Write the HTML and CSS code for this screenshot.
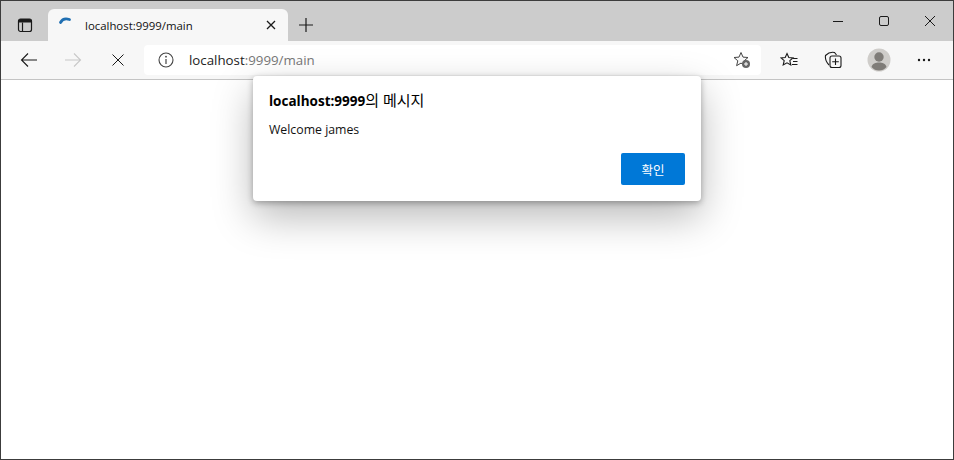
FILE: index.html
```html
<!DOCTYPE html>
<html lang="ko">
<head>
  <meta charset="UTF-8">
  <meta name="viewport" content="width=device-width, initial-scale=1.0">
  <title>localhost:9999/main</title>
  <link rel="stylesheet" href="styles.css">
</head>
<body>
  <div class="window">
    <div class="tabstrip">
      <div class="tab-actions">
        <svg class="icon" width="16" height="16" viewBox="0 0 16 16"><rect x="1.5" y="2" width="13" height="12.5" rx="2" fill="none" stroke="#1a1a1a" stroke-width="1.2"/><path d="M1.5 5.5h13V4a2 2 0 0 0-2-2h-9a2 2 0 0 0-2 2z" fill="#1a1a1a"/><path d="M5.5 5.5v9" stroke="#1a1a1a" stroke-width="1.2"/></svg>
      </div>
      <div class="tab">
        <svg class="spinner" width="16" height="16" viewBox="0 0 16 16"><path d="M2.500 8.500C4 5.500 7 4 11.500 5.500" fill="none" stroke="#1f6fb2" stroke-width="2.800" stroke-linecap="round"/></svg>
        <span class="tab-title">localhost:9999/main</span>
        <svg class="tab-close" width="10" height="10" viewBox="0 0 10 10"><path d="M1 1l8 8M9 1l-8 8" stroke="#1a1a1a" stroke-width="1.300"/></svg>
      </div>
      <svg class="new-tab" width="16" height="16" viewBox="0 0 16 16"><path d="M8 1v14M1 8h14" stroke="#1a1a1a" stroke-width="1.200"/></svg>
      <div class="caption">
        <svg width="12" height="12" viewBox="0 0 12 12"><path d="M1 6.500h10" stroke="#1a1a1a"/></svg>
        <svg width="12" height="12" viewBox="0 0 12 12"><rect x="1.500" y="1.500" width="9" height="9" rx="1.500" fill="none" stroke="#1a1a1a"/></svg>
        <svg width="12" height="12" viewBox="0 0 12 12"><path d="M1 1l10 10M11 1L1 11" stroke="#1a1a1a"/></svg>
      </div>
    </div>

    <div class="toolbar">
      <div class="nav">
        <svg width="18" height="16" viewBox="0 0 18 16"><path d="M17 8H1.500M8 1.500L1.500 8 8 14.500" fill="none" stroke="#1a1a1a" stroke-width="1.100"/></svg>
        <svg width="18" height="16" viewBox="0 0 18 16"><path d="M1 8h15.500M10 1.500L16.500 8 10 14.500" fill="none" stroke="#c8c8c8" stroke-width="1.100"/></svg>
        <svg width="14" height="14" viewBox="0 0 14 14"><path d="M1.500 1.500l11 11M12.500 1.500l-11 11" stroke="#1a1a1a" stroke-width="1"/></svg>
      </div>
      <div class="address">
        <svg class="info" width="16" height="16" viewBox="0 0 16 16"><circle cx="8" cy="8" r="7" fill="none" stroke="#444" stroke-width="1.100"/><path d="M8 7v5" stroke="#444" stroke-width="1.200"/><circle cx="8" cy="4.700" r=".9" fill="#444"/></svg>
        <span class="url"><span class="host">localhost</span>:9999/main</span>
        <svg class="fav-add" width="18" height="18" viewBox="0 0 18 18"><path d="M8 1.500l2 4.600 5 .4-3.800 3.300 1.200 4.900L8 12.100l-4.400 2.600 1.200-4.900L1 6.500l5-.4z" fill="#f7f7f7" stroke="#444" stroke-width="1"/><circle cx="13" cy="13" r="4" fill="#666"/><path d="M13 11v4M11 13h4" stroke="#fff"/></svg>
      </div>
      <div class="tools">
        <span class="tool"><svg width="18" height="16" viewBox="0 0 18 16"><path d="M7 1.500l1.800 4 4.200.4-3.200 2.800 1 4.300L7 10.800 3.200 13l1-4.300L1 5.900l4.200-.4z" fill="none" stroke="#1a1a1a" stroke-width="1.100"/><path d="M13 6.500h4.500M13 9.500h4.500M12 12.500h5.500" stroke="#1a1a1a"/></svg></span>
        <span class="tool tool-collections"><svg width="18" height="18" viewBox="0 0 18 18"><path d="M5 14C3 12 1 8 1.500 4.500 4 2 8 1 10.500 1.500l2 2.500" fill="none" stroke="#1a1a1a" stroke-width="1.100"/><rect x="6" y="5" width="11" height="11.500" rx="2" fill="#f7f7f7" stroke="#1a1a1a" stroke-width="1.100"/><path d="M11.500 7.500v6.500M8.200 10.800h6.600" stroke="#1a1a1a" stroke-width="1.100"/></svg></span>
        <span class="tool"><svg width="24" height="24" viewBox="0 0 24 24"><circle cx="12" cy="12" r="11.500" fill="#cfcdca"/><circle cx="12" cy="9" r="4.700" fill="#7f7c78"/><path d="M4.500 19c1-3.500 4-4.500 7.500-4.500s6.500 1 7.500 4.500c-2 2.500-4.500 3.500-7.500 3.500s-5.500-1-7.500-3.500z" fill="#7f7c78"/></svg></span>
        <span class="tool"><svg width="14" height="4" viewBox="0 0 14 4"><circle cx="2" cy="2" r="1.200" fill="#1a1a1a"/><circle cx="7" cy="2" r="1.200" fill="#1a1a1a"/><circle cx="12" cy="2" r="1.200" fill="#1a1a1a"/></svg></span>
      </div>
    </div>

    <div class="page"></div>

    <div class="dialog">
      <h1 class="dialog-title"><b>localhost:9999</b>의 메시지</h1>
      <p class="dialog-text">Welcome james</p>
      <div class="dialog-buttons">
        <button class="ok">확인</button>
      </div>
    </div>
  </div>
</body>
</html>
```

FILE: styles.css
```css
html, body {
  margin: 0;
  padding: 0;
  height: 100%;
  overflow: hidden;
}

body {
  font-family: 'Open Sans', 'Noto Sans CJK KR', sans-serif;
  color: #111;
}

.window {
  position: relative;
  box-sizing: border-box;
  height: 460px;
  border: 1px solid #3c3c3c;
  display: flex;
  flex-direction: column;
  background: #fff;
}

.tabstrip {
  height: 40px;
  background: #cccccc;
  display: flex;
  align-items: flex-end;
}

.tab-actions {
  width: 47px;
  height: 32px;
  display: flex;
  align-items: center;
  padding-left: 16px;
  box-sizing: border-box;
}

.tab {
  width: 240px;
  height: 32px;
  box-sizing: border-box;
  padding: 0 12px 0 10px;
  background: #f7f7f7;
  border-radius: 6px 6px 0 0;
  display: flex;
  align-items: center;
}

.spinner {
  margin-top: -6px;
}

.tab-title {
  margin-left: 11px;
  font-size: 11.4px;
  flex: 1;
}

.new-tab {
  margin: 0 0 8px 10px;
}

.caption {
  margin-left: auto;
  height: 40px;
  display: flex;
  align-items: center;
  gap: 34px;
  padding: 0 17px 0 0;
}

.toolbar {
  height: 38px;
  background: #f7f7f7;
  border-bottom: 1px solid #c4c4c4;
  display: flex;
  align-items: center;
}

.nav {
  width: 143px;
  box-sizing: border-box;
  padding-left: 19px;
  display: flex;
  align-items: center;
  gap: 26px;
}

.nav svg:last-child {
  margin-left: 3px;
}

.address {
  width: 617px;
  height: 30px;
  background: #fff;
  border-radius: 4px;
  display: flex;
  align-items: center;
  padding: 0 10px 0 14px;
  box-sizing: border-box;
}

.url {
  margin-left: 15px;
  font-size: 13.3px;
  color: #777;
  flex: 1;
}

.host {
  color: #222;
}

.tools {
  flex: 1;
  display: flex;
  align-items: center;
  padding-left: 5px;
}

.tool {
  width: 45px;
  display: flex;
  justify-content: center;
  align-items: center;
}

.tool-collections svg {
  margin-right: 2px;
}

.tool:last-child {
  width: 46px;
}

.page {
  flex: 1;
  background: #fff;
}

.dialog {
  position: absolute;
  left: 252px;
  top: 75px;
  width: 448px;
  height: 125px;
  box-sizing: border-box;
  padding: 14px 16px 16px;
  background: #fff;
  border-radius: 4px;
  box-shadow: 0 2px 6px rgba(0, 0, 0, 0.3), 0 16px 40px rgba(0, 0, 0, 0.28);
}

.dialog-title {
  margin: 0;
  font-size: 15px;
  line-height: 20px;
  font-weight: normal;
  color: #000;
}

.dialog-title b {
  font-size: 13.5px;
}

.dialog-text {
  margin: 9px 0 0;
  font-size: 12.3px;
  line-height: 20px;
}

.dialog-buttons {
  margin-top: 13px;
  display: flex;
  justify-content: flex-end;
}

.ok {
  width: 64px;
  height: 32px;
  padding: 0;
  border: none;
  border-radius: 2px;
  background: #0078d7;
  color: #fff;
  font-family: 'Noto Sans CJK KR', sans-serif;
  font-size: 12.5px;
}
```
